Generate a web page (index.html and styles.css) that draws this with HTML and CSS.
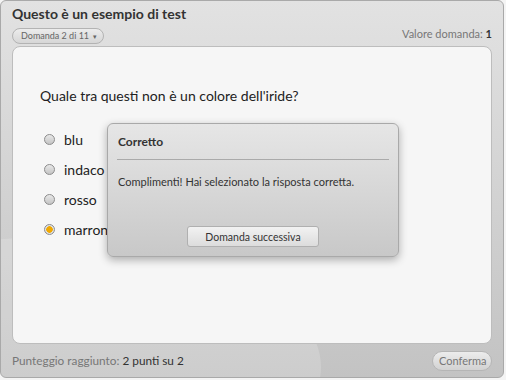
FILE: index.html
```html
<!DOCTYPE html>
<html lang="it">
<head>
  <meta charset="UTF-8">
  <title>Questo è un esempio di test</title>
  <link rel="stylesheet" href="styles.css">
</head>
<body>

<div class="frame">
  <div class="head">
    <div class="head-left">
      <h1 class="title">Questo è un esempio di test</h1>
      <span class="pill">Domanda 2 di 11 <span class="caret">▾</span></span>
    </div>
    <div class="value">Valore domanda: <b>1</b></div>
  </div>

  <div class="panel">
    <p class="question">Quale tra questi non è un colore dell'iride?</p>
    <ul class="options">
      <li><span class="radio"></span>blu</li>
      <li><span class="radio"></span>indaco</li>
      <li><span class="radio"></span>rosso</li>
      <li><span class="radio checked"></span>marrone</li>
    </ul>

    <div class="dialog">
      <div class="dialog-title">Corretto</div>
      <div class="dialog-text">Complimenti! Hai selezionato la risposta corretta.</div>
      <div class="dialog-actions">
        <button class="btn-next">Domanda successiva</button>
      </div>
    </div>
  </div>

  <div class="foot">
    <div class="score">Punteggio raggiunto: <b>2 punti su 2</b></div>
    <button class="btn-confirm">Conferma</button>
  </div>
</div>

</body>
</html>
```

FILE: styles.css
```css
body {
  margin: 0;
  background: #f4f4f4;
  font-family: Lato, "Open Sans", sans-serif;
}
.frame {
  position: relative;
  width: 504px;
  height: 378px;
  box-sizing: border-box;
  border: 1px solid #a9a9a9;
  border-radius: 6px;
  background: linear-gradient(#e2e2e2, #c3c3c3);
  padding: 0 11px 0 11px;
  display: flex;
  flex-direction: column;
  overflow: hidden;
}
.frame::before {
  content: "";
  position: absolute;
  left: -220px;
  bottom: -120px;
  width: 540px;
  height: 260px;
  border-radius: 50%;
  background: rgba(255, 255, 255, 0.18);
}
.head {
  display: flex;
  justify-content: space-between;
  align-items: flex-end;
  height: 45px;
  position: relative;
}
.head-left {
  align-self: flex-start;
}
.title {
  margin: 4px 0 0 0;
  font-size: 14px;
  line-height: 18px;
  font-weight: bold;
  color: #333;
}
.pill {
  display: inline-block;
  margin-top: 2px;
  padding: 0 6px 0 8px;
  height: 14px;
  line-height: 14px;
  font-size: 9px;
  color: #666;
  border: 1px solid #b3b3b3;
  border-radius: 8px;
  background: linear-gradient(#ececec, #d6d6d6);
}
.caret {
  font-size: 7px;
  margin-left: 2px;
}
.value {
  font-size: 11px;
  line-height: 14px;
  color: #777;
  margin-bottom: 5px;
}
.value b {
  color: #333;
}
.panel {
  position: relative;
  height: 296px;
  background: #f6f6f6;
  border: 1px solid #bdbdbd;
  border-radius: 8px;
  padding: 0 27px;
}
.question {
  margin: 40px 0 20px 0;
  font-size: 14px;
  color: #222;
}
.options {
  list-style: none;
  margin: 0;
  padding: 0 0 0 4px;
}
.options li {
  display: flex;
  align-items: center;
  height: 30px;
  font-size: 14px;
  color: #222;
}
.radio {
  width: 9px;
  height: 9px;
  border-radius: 50%;
  border: 1px solid #8c8c8c;
  background: linear-gradient(#e8e8e8, #c4c4c4);
  margin-right: 9px;
  box-sizing: content-box;
}
.radio.checked {
  background: radial-gradient(circle, #f0a800 0 3px, #e0e0e0 3.5px);
}
.dialog {
  position: absolute;
  left: 94px;
  top: 76px;
  width: 292px;
  height: 134px;
  box-sizing: border-box;
  border: 1px solid #a9a9a9;
  border-radius: 6px;
  background: linear-gradient(#e6e6e6, #c8c8c8);
  box-shadow: 0 3px 8px rgba(0, 0, 0, 0.3);
  padding: 0 9px;
  display: flex;
  flex-direction: column;
}
.dialog-title {
  font-size: 12px;
  font-weight: bold;
  color: #333;
  padding: 10px 0 10px 1px;
  border-bottom: 1px solid #aaa;
}
.dialog-text {
  font-size: 11px;
  color: #333;
  margin-top: 15px;
  padding-left: 1px;
}
.dialog-actions {
  margin-top: auto;
  margin-bottom: 9px;
  display: flex;
  justify-content: center;
}
.btn-next {
  width: 132px;
  height: 21px;
  font-family: inherit;
  font-size: 10.5px;
  color: #333;
  border: 1px solid #b0b0b0;
  border-radius: 3px;
  background: linear-gradient(#f2f2f2, #dcdcdc);
}
.foot {
  position: relative;
  flex: 1;
  display: flex;
  justify-content: space-between;
  align-items: center;
}
.score {
  font-size: 11.8px;
  color: #777;
}
.score b {
  font-weight: normal;
  color: #333;
}
.btn-confirm {
  width: 60px;
  height: 20px;
  font-family: inherit;
  font-size: 11px;
  color: #777;
  border: 1px solid #b5b5b5;
  border-radius: 10px;
  background: linear-gradient(#ececec, #d2d2d2);
}
```
